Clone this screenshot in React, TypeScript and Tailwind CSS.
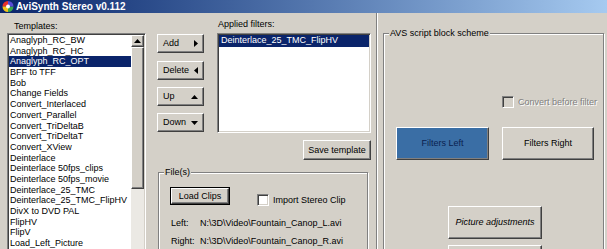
import type { ReactNode } from 'react'

const TEMPLATES = [
  'Anaglyph_RC_BW',
  'Anaglyph_RC_HC',
  'Anaglyph_RC_OPT',
  'BFF to TFF',
  'Bob',
  'Change Fields',
  'Convert_Interlaced',
  'Convert_Parallel',
  'Convert_TriDeltaB',
  'Convert_TriDeltaT',
  'Convert_XView',
  'Deinterlace',
  'Deinterlace 50fps_clips',
  'Deinterlace 50fps_movie',
  'Deinterlace_25_TMC',
  'Deinterlace_25_TMC_FlipHV',
  'DivX to DVD PAL',
  'FlipHV',
  'FlipV',
  'Load_Left_Picture',
  'Load_Right_Picture',
]

// classic win32 bevels
const raised =
  'border border-t-white border-l-white border-r-[#404040] border-b-[#404040] shadow-[inset_-1px_-1px_0_#808080]'
const sunken =
  'border border-t-[#808080] border-l-[#808080] border-r-white border-b-white shadow-[inset_1px_1px_0_#404040,inset_-1px_-1px_0_#d4d0c8]'

function Tri({ dir }: { dir: 'right' | 'left' | 'up' | 'down' }) {
  const horiz = dir === 'right' || dir === 'left'
  const points = {
    right: '0,0 4,3.5 0,7',
    left: '4,0 0,3.5 4,7',
    up: '0,4 3.5,0 7,4',
    down: '0,0 7,0 3.5,4',
  }[dir]
  return (
    <svg
      width={horiz ? 4 : 7}
      height={horiz ? 7 : 4}
      viewBox={horiz ? '0 0 4 7' : '0 0 7 4'}
      className="shrink-0"
    >
      <polygon points={points} fill="#000" />
    </svg>
  )
}

function AppIcon() {
  return (
    <svg width="14" height="13" viewBox="0 0 14 13" className="ml-[1px] shrink-0">
      <path d="M7 1 A5.5 5.5 0 0 0 1.5 6.5 L7 6.5Z" fill="#e8302a" />
      <path d="M1.5 6.5 A5.5 5.5 0 0 0 7 12 L7 6.5Z" fill="#f2c31b" />
      <path d="M7 12 A5.5 5.5 0 0 0 12.5 6.5 L7 6.5Z" fill="#3aa64a" />
      <path d="M12.5 6.5 A5.5 5.5 0 0 0 7 1 L7 6.5Z" fill="#5a4ad8" />
      <circle cx="7" cy="6.5" r="2" fill="#fff" />
    </svg>
  )
}

function Checkbox({ disabled }: { disabled?: boolean }) {
  return <div className={`h-[12px] w-[12px] shrink-0 ${disabled ? 'bg-[#d4d0c8]' : 'bg-white'} ${sunken}`} />
}

function GroupBox({ label, className, children }: { label: string; className?: string; children?: ReactNode }) {
  return (
    <div
      className={`relative shrink-0 border border-[#808080] shadow-[inset_1px_1px_0_#fff,1px_1px_0_#fff] ${className ?? ''}`}
    >
      <span className="absolute left-[5px] top-[-6px] bg-[#d4d0c8] px-[1px] leading-[11px]">{label}</span>
      {children}
    </div>
  )
}

function MoveButton({ label, dir, className }: { label: string; dir: 'right' | 'left' | 'up' | 'down'; className?: string }) {
  return (
    <div className={`flex h-[19px] items-center justify-between bg-[#d4d0c8] pl-[5px] pr-[5px] ${raised} ${className ?? ''}`}>
      <span>{label}</span>
      <Tri dir={dir} />
    </div>
  )
}

export default function App() {
  return (
    <div className="flex h-[249px] w-[607px] flex-col overflow-hidden bg-[#d4d0c8] font-['Liberation_Sans',Arial,sans-serif] text-[9px] leading-[11px] text-black">
      <div className="flex h-[13px] shrink-0 items-center bg-linear-to-r from-[#0a246a] to-[#a6caf0]">
        <AppIcon />
        <span className="ml-[1px] text-[10px] font-bold leading-[13px] text-white">AviSynth Stereo v0.112</span>
      </div>

      <div className="flex min-h-0 flex-1">
        {/* templates list */}
        <div className="ml-[7px] flex w-[139px] shrink-0 flex-col">
          <div className="mt-[8px] h-[11px] pl-[7px]">Templates:</div>
          <div className={`mt-[1px] flex h-[240px] shrink-0 bg-white p-[1px] ${sunken}`}>
            <div className="flex-1">
              {TEMPLATES.map((t, i) => (
                <div
                  key={t}
                  className={`h-[10.7px] whitespace-nowrap pl-[1px] leading-[10.7px] ${
                    i === 2 ? 'bg-[#0a246a] text-white' : ''
                  }`}
                >
                  {t}
                </div>
              ))}
            </div>
            <div className="flex w-[13px] flex-col">
              <div className={`flex h-[12px] items-center justify-center bg-[#d4d0c8] ${raised}`}>
                <Tri dir="up" />
              </div>
              <div className={`h-[142px] bg-[#d4d0c8] ${raised}`} />
              <div className="flex-1 bg-[#ebe9e4]" />
            </div>
          </div>
        </div>

        {/* middle: buttons, applied filters, files */}
        <div className="flex w-[230px] shrink-0 flex-col">
          <div className="flex">
            <div className="ml-[11px] mt-[21px] flex w-[47px] flex-col">
              <MoveButton label="Add" dir="right" />
              <MoveButton label="Delete" dir="left" className="mt-[8px]" />
              <MoveButton label="Up" dir="up" className="mt-[7px]" />
              <MoveButton label="Down" dir="down" className="mt-[7px]" />
            </div>
            <div className="ml-[13px] flex w-[154px] flex-col">
              <div className="mt-[6px] h-[11px] pl-[1px]">Applied filters:</div>
              <div className={`mt-[3px] h-[100px] bg-white p-[1px] ${sunken}`}>
                <div className="h-[11.5px] whitespace-nowrap bg-[#0a246a] pl-[2px] leading-[11.5px] text-white">
                  Deinterlace_25_TMC_FlipHV
                </div>
              </div>
              <div className={`mt-[7px] flex h-[20px] w-[68px] items-center justify-center self-end bg-[#d4d0c8] ${raised}`}>
                Save template
              </div>
            </div>
          </div>

          <GroupBox label="File(s)" className="ml-[12px] mt-[12px] h-[100px] w-[210px]">
            <div className="flex items-start pl-[11px] pt-[14px]">
              <div className="h-[18px] w-[60px] border border-black">
                <div className={`flex h-full items-center justify-center bg-[#d4d0c8] ${raised}`}>Load Clips</div>
              </div>
              <div className="ml-[27px] mt-[7px] flex items-center">
                <Checkbox />
                <span className="ml-[4px] whitespace-nowrap">Import Stereo Clip</span>
              </div>
            </div>
            <div className="mt-[8px] flex h-[18px] items-center pl-[12px]">
              <span className="w-[29px]">Left:</span>
              <span className="whitespace-nowrap">N:\3D\Video\Fountain_Canop_L.avi</span>
            </div>
            <div className="flex h-[18px] items-center pl-[12px]">
              <span className="w-[29px]">Right:</span>
              <span className="whitespace-nowrap">N:\3D\Video\Fountain_Canop_R.avi</span>
            </div>
          </GroupBox>
        </div>

        <div className="w-[2px] shrink-0 border-l border-[#808080] bg-white" />

        {/* AVS script block scheme */}
        <GroupBox label="AVS script block scheme" className="ml-[5px] mt-[20px] h-[240px] w-[221px]">
          <div className="mt-[62px] flex h-[12px] items-center pl-[118px]">
            <Checkbox disabled />
            <span className="ml-[4px] whitespace-nowrap text-[#808080] [text-shadow:1px_1px_0_#fff]">
              Convert before filter
            </span>
          </div>
          <div className="mt-[19px] flex pl-[12px]">
            <div className={`flex h-[33px] w-[93px] items-center justify-center bg-[#3a6ea5] text-[#0a1f50] ${raised}`}>
              Filters Left
            </div>
            <div className={`ml-[13px] flex h-[33px] w-[92px] items-center justify-center bg-[#d4d0c8] ${raised}`}>
              Filters Right
            </div>
          </div>
          <div className={`ml-[64px] mt-[46px] flex h-[33px] w-[94px] items-center justify-center bg-[#d4d0c8] italic ${raised}`}>
            Picture adjustments
          </div>
          <div className={`ml-[64px] mt-[6px] h-[33px] w-[94px] bg-[#d4d0c8] ${raised}`} />
        </GroupBox>
      </div>
    </div>
  )
}
